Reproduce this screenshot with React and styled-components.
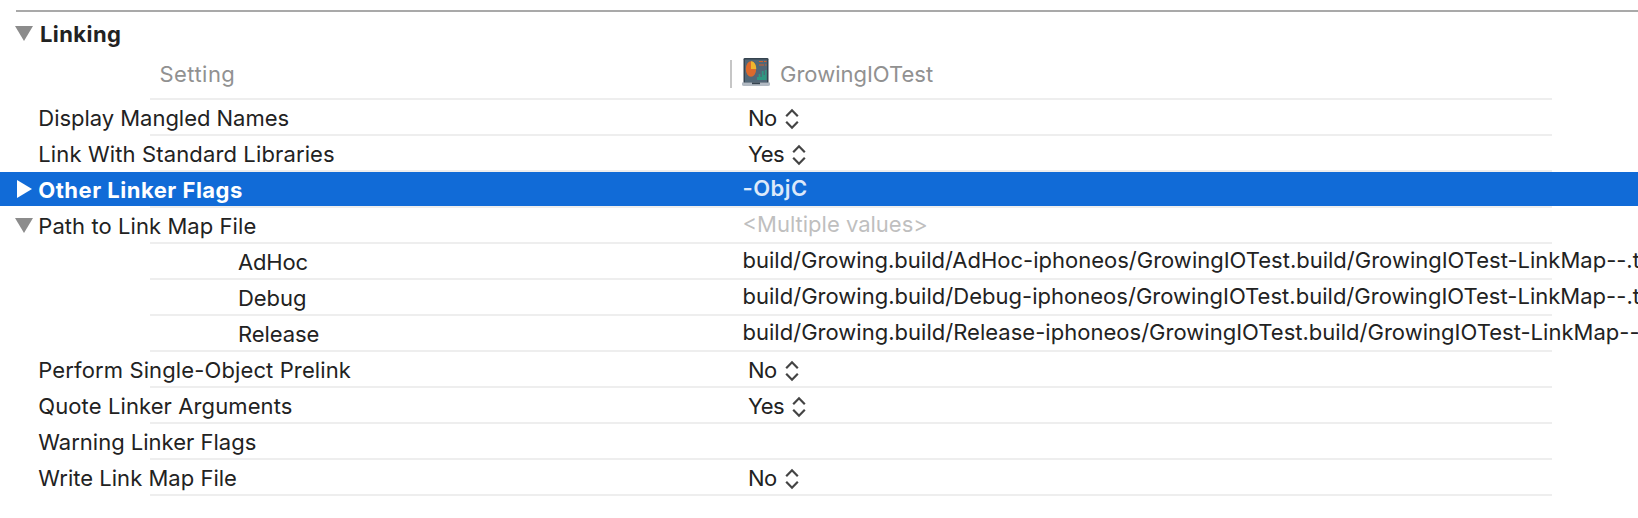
import React from "react";
import styled, { createGlobalStyle } from "styled-components";

const GlobalStyle = createGlobalStyle`
  body {
    margin: 0;
    background: #fff;
  }
`;

const Panel = styled.main`
  box-sizing: border-box;
  height: 518px;
  padding-top: 10px;
  overflow: hidden;
  background: #fff;
  color: #222;
  font: 400 22px/34px Inter, "Liberation Sans", sans-serif;
  white-space: pre;
`;

const Divider = styled.hr`
  height: 2px;
  margin: 0 0 0 16px;
  border: 0;
  background: #a9a9a9;
`;

const SectionHeader = styled.header`
  display: flex;
  height: 44px;
  line-height: 45px;
  font-weight: 700;
`;

const ColumnHeader = styled.div`
  display: flex;
  height: 42px;
  color: #919191;
`;

const SettingHeading = styled.div`
  box-sizing: border-box;
  width: 730px;
  padding: 1px 0 0 159.5px;
  letter-spacing: 0.45px;
`;

const TargetHeading = styled.div`
  display: flex;
  align-items: flex-start;
`;

const ColumnGrip = styled.span`
  width: 2px;
  height: 28px;
  margin: 4px 10px 0 0;
  background: #c6c6c6;
`;

const TargetIcon = styled.svg`
  width: 28px;
  height: 30px;
  margin: 1px 10px 0 0;
`;

const TargetName = styled.span`
  padding-top: 1px;
`;

const GridLine = styled.div`
  width: 1402px;
  height: 2px;
  margin-left: 150px;
  background: #eeeeee;
`;

const Row = styled.div`
  display: flex;
  height: 34px;
  background: ${(p) => (p.$selected ? "#116bd7" : "transparent")};
  color: ${(p) => (p.$selected ? "#fff" : "inherit")};
  font-weight: ${(p) => (p.$selected ? 700 : 400)};
`;

const Disclosure = styled.svg`
  flex: none;
  width: 22px;
  height: 34px;
  margin-left: 14px;
`;

const Gutter = styled.span`
  flex: none;
  width: 36px;
`;

const Name = styled.div`
  box-sizing: border-box;
  flex: none;
  width: 706.5px;
  padding: 1px 0 0 ${(p) => (p.$nested ? 202 : 2.3)}px;
  letter-spacing: ${(p) => p.$tracking || 0}px;
`;

const SectionTitle = styled.span`
  padding-left: 4px;
  letter-spacing: 0.42px;
`;

const Value = styled.div`
  margin-top: -1px;
  color: ${(p) => (p.$muted ? "#bfbfbf" : p.$selected ? "#dde9fa" : "inherit")};
  font-weight: ${(p) => (p.$selected ? 600 : 400)};
  letter-spacing: ${(p) => p.$tracking || 0}px;
`;

const Popup = styled.div`
  display: flex;
  gap: 8px;
  padding: 1px 0 0 5.5px;
  letter-spacing: -0.5px;
`;

const Stepper = styled.svg`
  width: 14px;
  height: 22px;
  margin-top: 7px;
`;

const Triangle = ({ open, header, selected }) => (
  <Disclosure viewBox="0 0 22 34">
    {open ? (
      <path d={header ? "M1 14H19L10 29Z" : "M1 10H19L10 25Z"} fill="#8c8c8c" />
    ) : (
      <path d="M3 8V26L18 17Z" fill={selected ? "#fff" : "#8c8c8c"} />
    )}
  </Disclosure>
);

const Choice = ({ value }) => (
  <Popup>
    {value}
    <Stepper viewBox="0 0 14 22" fill="none" stroke="#444" strokeWidth="2.2">
      <path d="M1.2 8.3 7 2.3l5.8 6M1.2 13.7 7 19.7l5.8-6" />
    </Stepper>
  </Popup>
);

const ProjectIcon = () => (
  <TargetIcon viewBox="0 0 28 30">
    <rect x="1.5" y="1" width="25" height="26" rx="1.3" fill="#35434f" />
    <rect x="3" y="2.5" width="22" height="23" fill="#526777" />
    <ellipse cx="9" cy="12" rx="5.2" ry="7.7" fill="#dd6a2c" />
    <path d="M9 4.3c3 0 5.2 3.3 5.2 7.7H9Z" fill="#efb62f" />
    <path d="M17 4.5h4M22 4.5h2.5M17 8h5M23 8h1.5" stroke="#d4602b" strokeWidth="1.2" />
    <path d="M15 23v-3h1.7v-3h1.7v3h1.4v-6h1.8v4h1.3v-5h1.7v10Z" fill="#2f9882" />
    <path d="M0 25.5h28v2q0 1.5-2 1.5H2Q0 29 0 27.5Z" fill="#b2bac3" />
    <path d="M10 25.5h8v1.7h-8Z" fill="#35434f" />
  </TargetIcon>
);

const settings = [
  { name: "Display Mangled Names", tracking: -0.03, choice: "No" },
  { name: "Link With Standard Libraries", tracking: 0.13, choice: "Yes" },
  { name: "Other Linker Flags", tracking: 0.5, value: "-ObjC", valueTracking: 0.47, selected: true, disclosure: "closed" },
  { name: "Path to Link Map File", tracking: 0.07, value: "<Multiple values>", muted: true, disclosure: "open" },
  { name: "AdHoc", tracking: -0.2, nested: true, value: "build/Growing.build/AdHoc-iphoneos/GrowingIOTest.build/GrowingIOTest-LinkMap--.t" },
  { name: "Debug", tracking: -0.05, nested: true, value: "build/Growing.build/Debug-iphoneos/GrowingIOTest.build/GrowingIOTest-LinkMap--.t", valueTracking: 0.02 },
  { name: "Release", tracking: -0.08, nested: true, value: "build/Growing.build/Release-iphoneos/GrowingIOTest.build/GrowingIOTest-LinkMap--", valueTracking: 0.02 },
  { name: "Perform Single-Object Prelink", tracking: 0.12, choice: "No" },
  { name: "Quote Linker Arguments", tracking: 0.1, choice: "Yes" },
  { name: "Warning Linker Flags" },
  { name: "Write Link Map File", tracking: 0.02, choice: "No" },
];

const SettingRow = ({ item }) => (
  <Row $selected={item.selected}>
    {item.disclosure ? <Triangle open={item.disclosure === "open"} selected={item.selected} /> : <Gutter />}
    <Name $nested={item.nested} $tracking={item.tracking}>{item.name}</Name>
    {item.choice && <Choice value={item.choice} />}
    {item.value && (
      <Value $muted={item.muted} $selected={item.selected} $tracking={item.valueTracking}>
        {item.value}
      </Value>
    )}
  </Row>
);

export default function App() {
  return (
    <>
      <GlobalStyle />
      <Panel>
        <Divider />
        <SectionHeader>
          <Triangle open header />
          <SectionTitle>Linking</SectionTitle>
        </SectionHeader>
        <ColumnHeader>
          <SettingHeading>Setting</SettingHeading>
          <TargetHeading>
            <ColumnGrip />
            <ProjectIcon />
            <TargetName>GrowingIOTest</TargetName>
          </TargetHeading>
        </ColumnHeader>
        <GridLine />
        {settings.map((item) => (
          <React.Fragment key={item.name}>
            <SettingRow item={item} />
            <GridLine />
          </React.Fragment>
        ))}
      </Panel>
    </>
  );
}
